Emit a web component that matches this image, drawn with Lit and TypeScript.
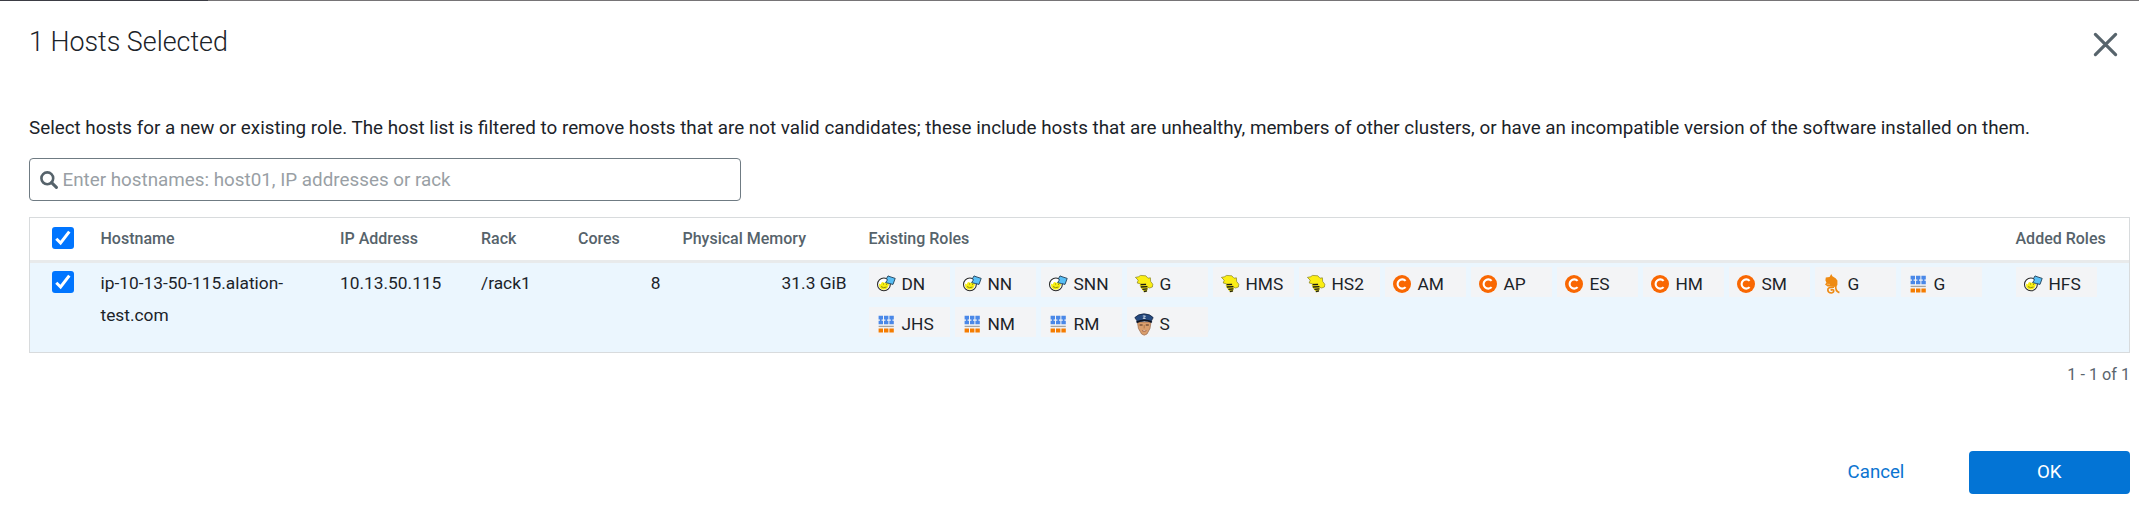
import { LitElement, html, css, svg } from "lit";
import { customElement } from "lit/decorators.js";

type Service = "hdfs" | "hive" | "yarn" | "mgmt" | "oozie" | "zk";

const icons: Record<Service, unknown> = {
  hdfs: svg`
    <circle cx="6.9" cy="9.4" r="6.4" fill="#fff" stroke="#2b2b2b" stroke-width="1.1"/>
    <path d="M2 8.6L3.6 9.6L5 7L7.6 7.8L10.4 7.4L12 9.6L10.8 12.6L8.5 14.6H5L2.4 12.4Z" fill="#f6ee10"/>
    <path d="M4 11.6Q6.4 13.6 9.6 12M6 9h1M9 9.4h1" fill="none" stroke="#77750f" stroke-width=".8"/>
    <path d="M8.6 7.6L10.4 5L9.6 3.4L11 .9L13 1.7L18.2 3.4L16 9.4L12.6 8.6Z" fill="#58bff6" stroke="#1f4058" stroke-width=".9"/>`,
  hive: svg`
    <path d="M.4 2.4L3.4 1.8L5.6 .4L10.8 .8L13 3.2L15.4 2.8L15.6 6.4L17.8 9.2L17.4 12L14.6 13L11.6 11.8L9 9.8L5.2 8.8L2.2 8L3.2 5.2Z" fill="#fbee14" stroke="#75700f" stroke-width=".6"/>
    <path d="M6 8.2L11.4 8.4L13 12.6L12 16.2L9.8 17.6L6.4 13.8L4.6 10.6Z" fill="#e4d714"/>
    <path d="M5.6 9.6L11 9.4M5.8 12L12.4 11.6M7.4 14.4L12.4 13.8M8.8 16.5L12 15.9" stroke="#1d1d12" stroke-width="1.3"/>`,
  yarn: svg`
    <path d="M1.6 .8h4.4v3.6H1.6zM7 .8h4.4v3.6H7zM12.4 .8h4.4v3.6h-4.4zM1.6 5.8h4.4v3.4H1.6zM7 5.8h4.4v3.4H7zM12.4 5.8h4.4v3.4h-4.4zM3 4h1.6v2.4H3zM8.4 4H10v2.4H8.4zM13.8 4h1.6v2.4h-1.6z" fill="#4a88e8"/>
    <path d="M1.6 11.4H16.8" stroke="#a3a3a3" stroke-width="1.3"/>
    <path d="M1.6 13.6h4.4v4H1.6zM7 13.6h4.4v4H7zM12.4 13.6h4.4v4h-4.4z" fill="#f57c00"/>`,
  mgmt: svg`
    <circle cx="9" cy="9" r="9" fill="#f96702"/>
    <path d="M12.6 5.9A4.6 4.6 0 1 0 12.6 12.1" fill="none" stroke="#fff" stroke-width="2.1"/>`,
  oozie: svg`
    <path d="M2.8 2.4L6.6 2L8.2 -1L9.4 1.2L12.6 3.2L14.4 5.6V10L12.6 12L9.6 11.4L4.6 11.4L2 9.4L3.4 7.8L2.4 5.2Z" fill="#ee8a12"/>
    <path d="M3.8 9.2L7 9.4" stroke="#f8c98a" stroke-width=".7"/>
    <path d="M11 12.2Q4.6 11.8 4.8 15Q5.2 18 8.4 18Q11.2 17.4 10.6 15.2Q9 13.8 7.8 15.4M12.8 10.4Q12 16.2 16.4 17.6" fill="none" stroke="#ee8a12" stroke-width="1.7"/>`,
  zk: svg`
    <path d="M2.4 7L3.4 13.4L6.6 19L9.2 20.2L12 19L15 13.4L16 7Z" fill="#d99e6c" stroke="#8a5d3f" stroke-width=".6"/>
    <path d="M-.2 2.6Q3 -1 9 -1.2Q15.4 -1 18.2 2.6L16.6 5.6V7.4Q9 4.4 1.8 7.6L1.8 5.6Z" fill="#24497f" stroke="#101d37" stroke-width=".7"/>
    <path d="M1.9 7Q9 3.6 16.5 6.8" fill="none" stroke="#0e141f" stroke-width="1.6"/>
    <path d="M7.8 1h2.6L8.2 3.4h2.4" fill="none" stroke="#dfe6ee" stroke-width=".9"/>
    <path d="M4.6 10h3M10.8 10h3" stroke="#4a2f20" stroke-width="1.1"/>
    <path d="M7 15.6Q9.2 17 11.4 15.6" fill="#fff" stroke="#85412d" stroke-width=".7"/>
    <path d="M9.2 10v3.4" stroke="#b37749" stroke-width="1"/>`,
};

const existing: [Service, string][] = [
  ["hdfs", "DN"], ["hdfs", "NN"], ["hdfs", "SNN"], ["hive", "G"], ["hive", "HMS"],
  ["hive", "HS2"], ["mgmt", "AM"], ["mgmt", "AP"], ["mgmt", "ES"], ["mgmt", "HM"],
  ["mgmt", "SM"], ["oozie", "G"], ["yarn", "G"], ["yarn", "JHS"], ["yarn", "NM"],
  ["yarn", "RM"], ["zk", "S"],
];
const added: [Service, string][] = [["hdfs", "HFS"]];

@customElement("app-root")
export class AppRoot extends LitElement {
  static styles = css`
    :host { display: block; font-family: Roboto, sans-serif; color: #1b2329; background: #fff; height: 511px; overflow: hidden; }
    * { box-sizing: border-box; }
    .backdrop { height: 1px; background: linear-gradient(90deg, #3b3c44 208px, #767476 208px); }
    .dialog { padding: 0 9px 0 29px; }
    header { display: flex; justify-content: space-between; align-items: center; height: 86px; padding: 0 11px 4px 0; }
    h1 { margin: 0; font-size: 26.85px; font-weight: 300; line-height: 32px; }
    .close { width: 27px; height: 27px; margin-top: 5px; }
    .intro { margin: 28px 0 0; font-size: 18.82px; line-height: 27px; white-space: nowrap; }
    .search { display: flex; align-items: center; width: 712px; height: 43px; margin-top: 16px; padding-left: 10px; border: 1px solid #6f7b83; border-radius: 4px; gap: 4.5px; font-size: 18.82px; color: #999fa5; }
    .search svg { width: 18px; height: 18px; }
    .table { margin-top: 16px; border: 1px solid #d8dbdd; }
    .row { display: grid; grid-template-columns: 59.5px 239.5px 141px 97px 104.5px 186px 1147px 1fr; }
    .row > div { padding: 0 11px; }
    .head { height: 45px; border-bottom: 3px solid #e8eaeb; font-size: 16px; font-weight: 500; line-height: 41px; color: #56636b; }
    .body { height: 89px; background: #ebf6fe; font-size: 17.33px; line-height: 32px; }
    .body > div { padding-top: 4px; }
    .row > .check { padding-left: 21.6px; padding-top: 9px; }
    .body > .check { padding-top: 8px; }
    .check svg { display: block; width: 22px; height: 22px; }
    .num { text-align: right; }
    .row > .roles { display: flex; flex-wrap: wrap; align-content: flex-start; gap: 10px 5px; padding-top: 4px; padding-right: 0; }
    .chip { display: flex; align-items: center; width: 81px; height: 30px; padding-left: 8px; background: #f3f4f6; line-height: 30px; gap: 7px; }
    .chip svg { flex: none; width: 18px; height: 18px; overflow: visible; margin-top: 3px; }
    .chip span { padding-top: 3px; }
    .pager { margin-top: 10px; text-align: right; font-size: 16.2px; line-height: 24px; color: #5a656d; }
    footer { display: flex; justify-content: flex-end; margin-top: 64px; font-size: 18.67px; line-height: 43px; text-align: center; }
    .btn { width: 161.5px; height: 43px; border-radius: 4px; }
    .cancel { color: #0b74d1; width: 185px; }
    .ok { background: #0374d5; color: #fff; }
  `;

  private check() {
    return html`<div class="check"><svg viewBox="0 0 22 22"><rect width="22" height="22" rx="3" fill="#0075ff"/><path d="M4.3 11.7L8.6 16L17.3 4.6" fill="none" stroke="#fff" stroke-width="3"/></svg></div>`;
  }

  private chip([service, label]: [Service, string]) {
    return html`<div class="chip"><svg viewBox="0 0 18 18">${icons[service]}</svg><span>${label}</span></div>`;
  }

  render() {
    return html`
      <div class="backdrop"></div>
      <div class="dialog">
        <header>
          <h1>1 Hosts Selected</h1>
          <svg class="close" viewBox="0 0 27 27"><path d="M3.4 3.4L23.6 23.6M23.6 3.4L3.4 23.6" stroke="#57646c" stroke-width="3.2" stroke-linecap="round"/></svg>
        </header>
        <p class="intro">Select hosts for a new or existing role. The host list is filtered to remove hosts that are not valid candidates; these include hosts that are unhealthy, members of other clusters, or have an incompatible version of the software installed on them.</p>
        <div class="search">
          <svg viewBox="0 0 18 18"><circle cx="7.3" cy="7.3" r="5.9" fill="none" stroke="#56636b" stroke-width="2.6"/><path d="M11.6 11.6L16.4 16.4" stroke="#56636b" stroke-width="3" stroke-linecap="round"/></svg>
          <span>Enter hostnames: host01, IP addresses or rack</span>
        </div>
        <div class="table">
          <div class="row head">
            ${this.check()}
            <div>Hostname</div><div>IP Address</div><div>Rack</div><div>Cores</div>
            <div>Physical Memory</div><div>Existing Roles</div><div>Added Roles</div>
          </div>
          <div class="row body">
            ${this.check()}
            <div>ip-10-13-50-115.alation-<br>test.com</div><div>10.13.50.115</div><div>/rack1</div>
            <div class="num">8</div><div class="num">31.3 GiB</div>
            <div class="roles">${existing.map((r) => this.chip(r))}</div>
            <div class="roles">${added.map((r) => this.chip(r))}</div>
          </div>
        </div>
        <div class="pager">1 - 1 of 1</div>
        <footer><div class="btn cancel">Cancel</div><div class="btn ok">OK</div></footer>
      </div>
    `;
  }
}
